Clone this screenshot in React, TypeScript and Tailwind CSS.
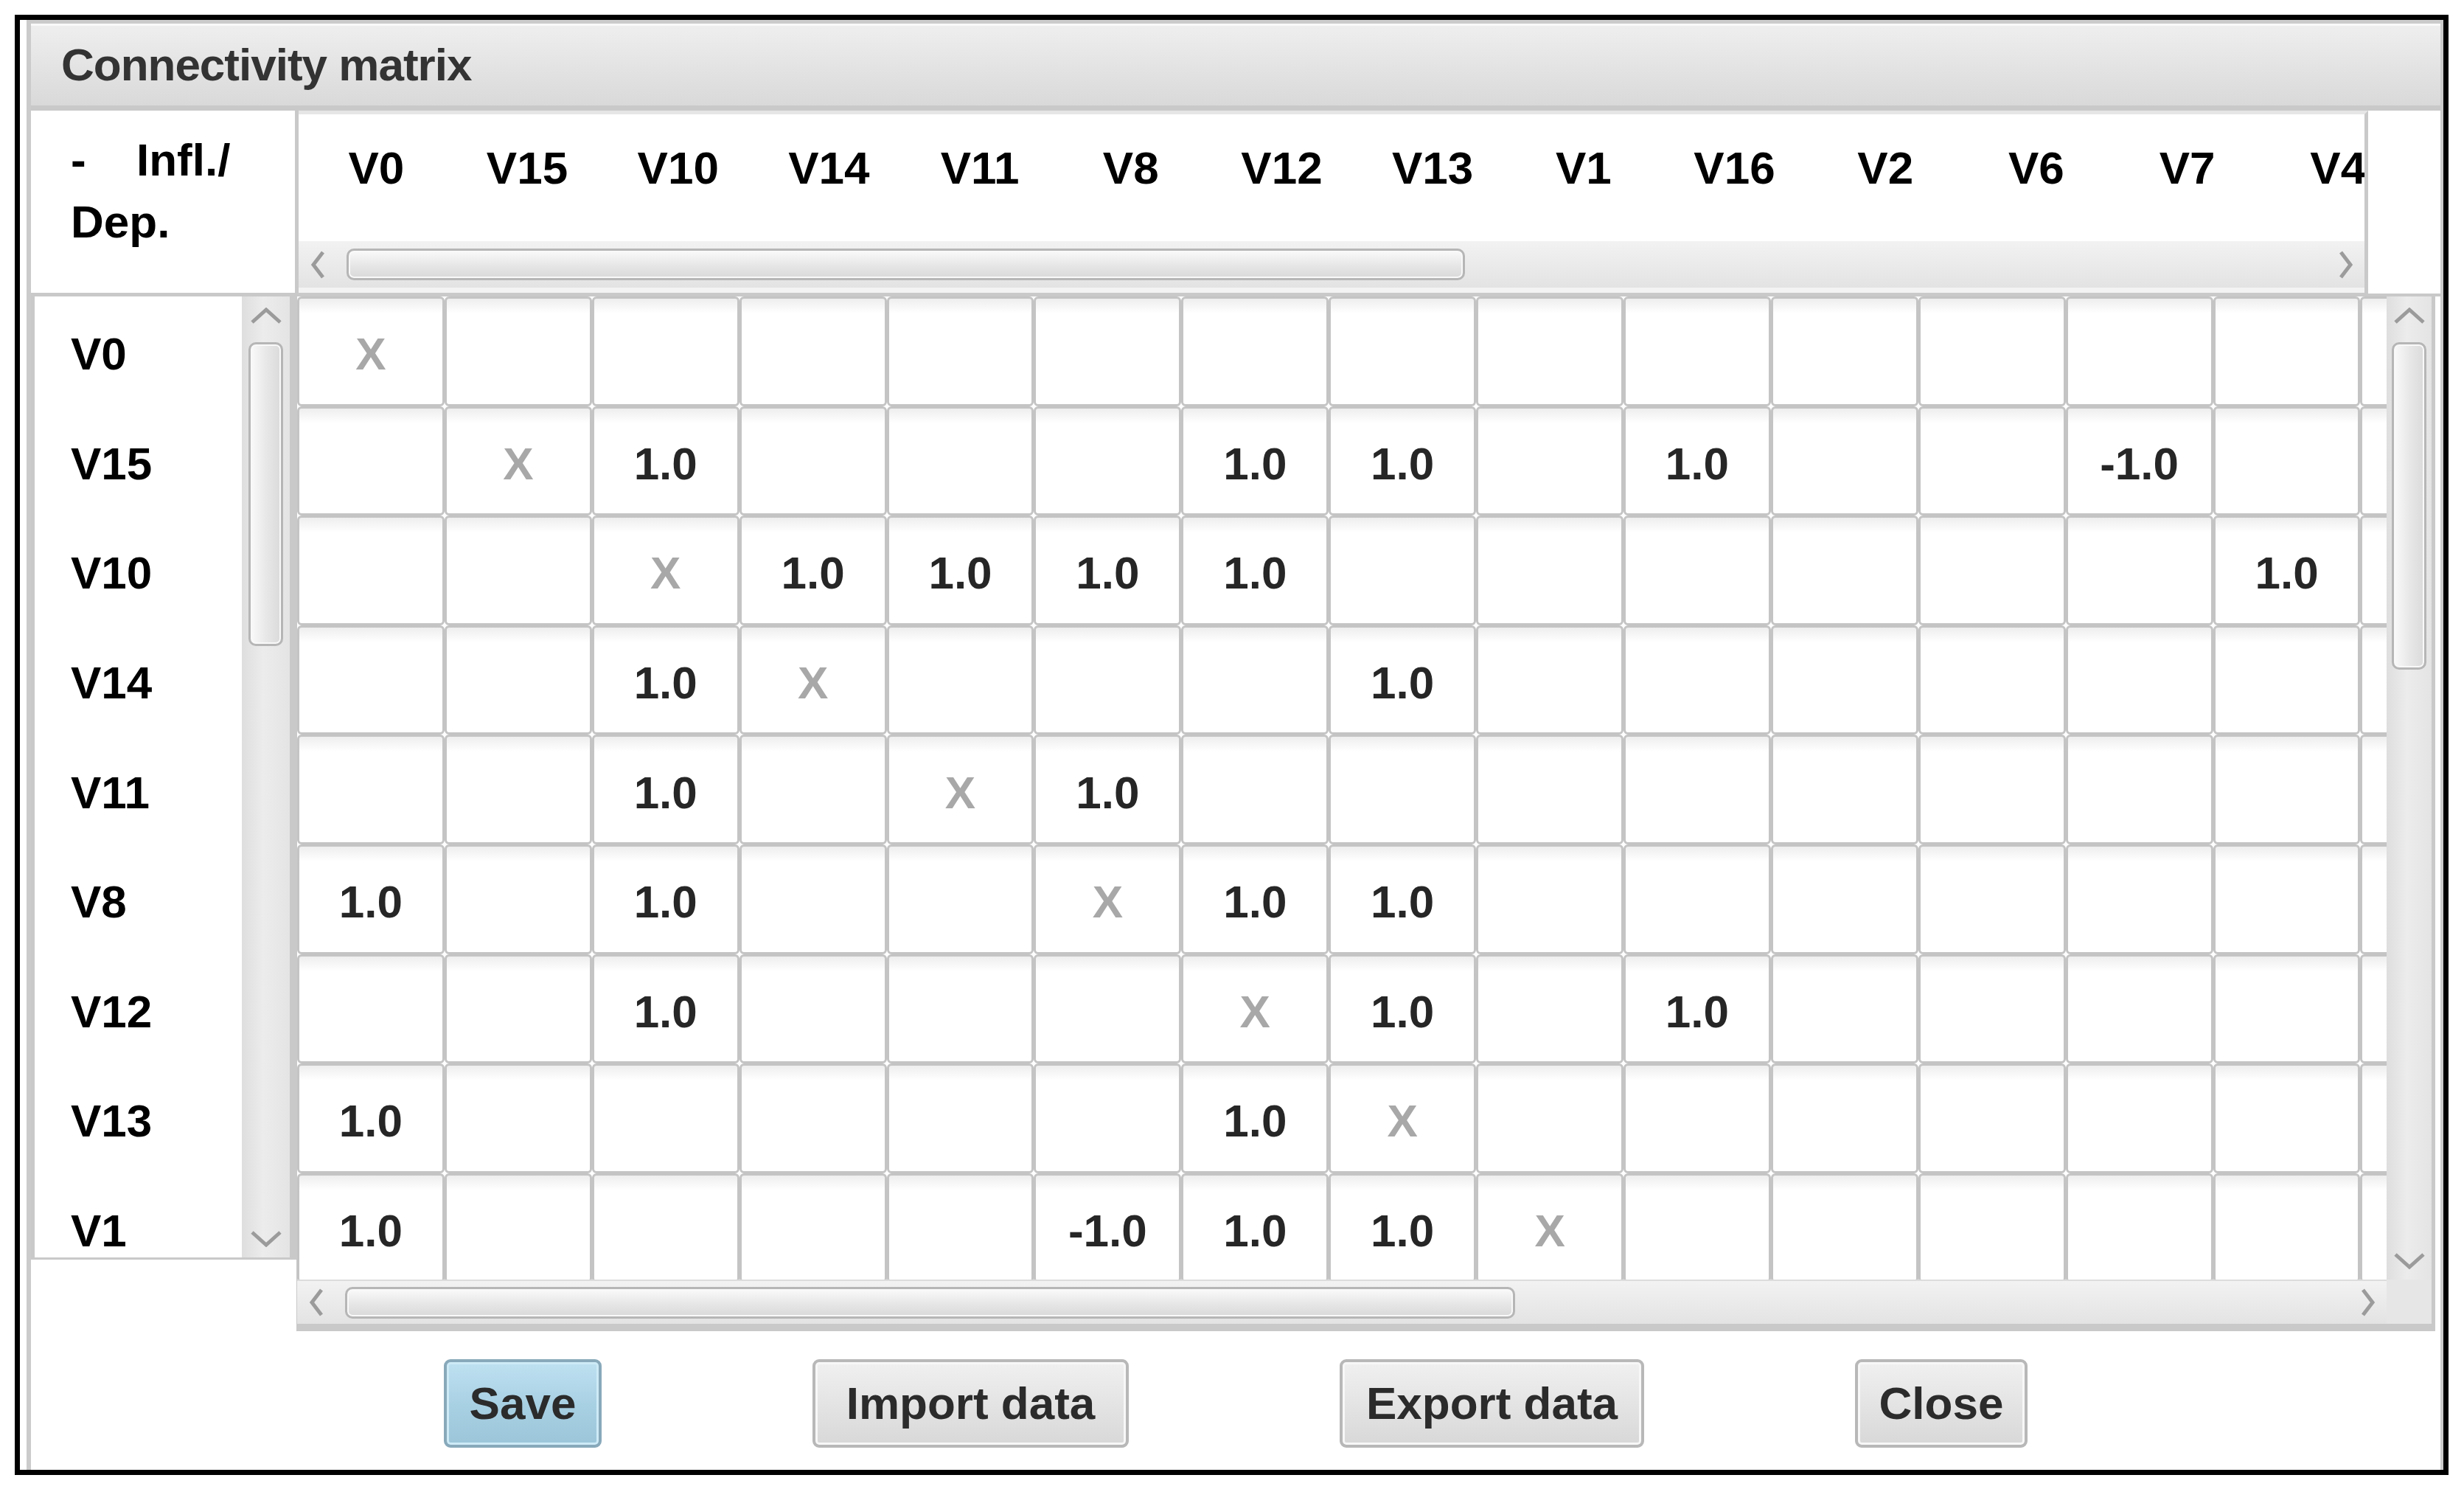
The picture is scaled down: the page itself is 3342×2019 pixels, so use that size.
import React from 'react';

const COLS = ['V0', 'V15', 'V10', 'V14', 'V11', 'V8', 'V12', 'V13', 'V1', 'V16', 'V2', 'V6', 'V7', 'V4'];
const ROWS = ['V0', 'V15', 'V10', 'V14', 'V11', 'V8', 'V12', 'V13', 'V1'];

// non-empty cells per row (column index -> value); the diagonal is drawn as "X"
const DATA: Record<string, Record<number, string>> = {
  V0: {},
  V15: { 2: '1.0', 6: '1.0', 7: '1.0', 9: '1.0', 12: '-1.0' },
  V10: { 3: '1.0', 4: '1.0', 5: '1.0', 6: '1.0', 13: '1.0' },
  V14: { 2: '1.0', 7: '1.0' },
  V11: { 2: '1.0', 5: '1.0' },
  V8: { 0: '1.0', 2: '1.0', 6: '1.0', 7: '1.0' },
  V12: { 2: '1.0', 7: '1.0', 9: '1.0' },
  V13: { 0: '1.0', 6: '1.0' },
  V1: { 0: '1.0', 5: '-1.0', 6: '1.0', 7: '1.0' },
};

type Dir = 'up' | 'down' | 'left' | 'right';

function Chevron({ dir }: { dir: Dir }) {
  const vertical = dir === 'up' || dir === 'down';
  const points = {
    up: '2,20 21,3 40,20',
    down: '2,3 21,20 40,3',
    left: '17,2 4,19 17,36',
    right: '3,2 16,19 3,36',
  }[dir];
  return (
    <svg
      width={vertical ? 42 : 20}
      height={vertical ? 23 : 38}
      viewBox={vertical ? '0 0 42 23' : '0 0 20 38'}
      className="shrink-0"
    >
      <polyline points={points} fill="none" stroke="#9b9b9b" strokeWidth="5" />
    </svg>
  );
}

function HScroll({ thumbW }: { thumbW: number }) {
  return (
    <div className="flex h-full items-center bg-[linear-gradient(#f2f2f2,#e3e3e3)] pl-[16px] pr-[15px]">
      <Chevron dir="left" />
      <div
        className="ml-[29px] h-[43px] shrink-0 rounded-[10px] border-[3px] border-[#b6b6b6] bg-[linear-gradient(#fafafa,#e6e6e6_55%,#d9d9d9)] shadow-[inset_0_0_0_2px_#f9f9f9]"
        style={{ width: thumbW }}
      />
      <div className="flex-1" />
      <Chevron dir="right" />
    </div>
  );
}

function VScroll({ thumbH, upTop, bottomPad }: { thumbH: number; upTop: number; bottomPad: number }) {
  return (
    <div
      className="flex h-full flex-col items-center bg-[linear-gradient(to_right,#dedede,#ececec_45%,#e4e4e4)]"
      style={{ paddingTop: upTop, paddingBottom: bottomPad }}
    >
      <Chevron dir="up" />
      <div
        className="mt-[24px] w-[47px] shrink-0 rounded-[10px] border-[3px] border-[#b6b6b6] bg-[linear-gradient(to_right,#fafafa,#e8e8e8_50%,#dadada)] shadow-[inset_0_0_0_2px_#f9f9f9]"
        style={{ height: thumbH }}
      />
      <div className="flex-1" />
      <Chevron dir="down" />
    </div>
  );
}

function Cell({ value, diag }: { value?: string; diag: boolean }) {
  return (
    <div className="flex h-[148.6px] w-[199.9px] shrink-0 items-center justify-center rounded-[6px] border-[3px] border-[#c4c4c4] bg-[linear-gradient(#eeeeee,#ffffff_20px)] pt-[8px] leading-[72px]">
      {diag ? <span className="text-[#a8a8a8]">X</span> : <span className="text-[#262626]">{value}</span>}
    </div>
  );
}

function Button({ label, width, primary }: { label: string; width: number; primary?: boolean }) {
  return (
    <div
      className={
        primary
          ? 'flex h-[120px] shrink-0 items-center justify-center rounded-[9px] border-[4px] border-[#88a9ba] bg-[linear-gradient(#bfe1f1,#a9d1e4_50%,#9cc5d9)] leading-[72px] text-[#2b2b2b] shadow-[inset_0_0_0_3px_#cdeaf6]'
          : 'flex h-[120px] shrink-0 items-center justify-center rounded-[9px] border-[4px] border-[#b8b8b8] bg-[linear-gradient(#f0f0f0,#e4e4e4_50%,#d8d8d8)] leading-[72px] text-[#2b2b2b] shadow-[inset_0_0_0_3px_#f7f7f7]'
      }
      style={{ width }}
    >
      {label}
    </div>
  );
}

export default function App() {
  return (
    <div className="h-[2019px] w-[3342px] bg-white pl-[20px] pt-[20px] font-['Liberation_Sans',Arial,sans-serif] text-[62px] font-bold">
      <div className="flex h-[1980px] w-[3301px] border-[7px] border-black bg-white pl-[9px]">
        <div className="flex flex-1 flex-col border-l-[6px] border-r-[4px] border-t-[5px] border-[#cbcbcb]">
          {/* title bar */}
          <div className="flex h-[118px] shrink-0 items-center border-b-[7px] border-[#c9c9c9] bg-[linear-gradient(#efefef,#d9d9d9)] pl-[41px] tracking-[-1px] text-[#333333] shadow-[inset_0_3px_0_#f9f9f9]">
            Connectivity matrix
          </div>

          {/* header row */}
          <div className="flex h-[252px] shrink-0">
            <div className="w-[363px] shrink-0 border-b-[5px] border-r-[5px] border-[#c9c9c9] bg-white pl-[54px] pt-[25px] leading-[84px] text-black">
              <div>
                <span className="inline-block w-[89px]">-</span>Infl./
              </div>
              <div>Dep.</div>
            </div>
            <div className="flex w-[2807px] shrink-0 flex-col border-b-[5px] border-r-[5px] border-t-[5px] border-b-[#c9c9c9] border-r-[#c9c9c9] border-t-[#e6e6e6]">
              <div className="flex h-[172px] shrink-0 overflow-hidden bg-white pl-[3px] pt-[37px] leading-[72px] text-black">
                {COLS.map((c) => (
                  <div key={c} className="w-[204.7px] shrink-0 text-center">
                    {c}
                  </div>
                ))}
              </div>
              <div className="h-[63px] shrink-0">
                <HScroll thumbW={1517} />
              </div>
              <div className="flex-1 bg-[#f3f3f3]" />
            </div>
            <div className="flex-1 border-b-[4px] border-[#c9c9c9] bg-white" />
          </div>

          {/* body row */}
          <div className="flex h-[1403px] shrink-0">
            <div className="flex w-[360px] shrink-0 flex-col">
              <div className="flex h-[1306px] shrink-0 border-b-[3px] border-l-[5px] border-r-[9px] border-[#c9c9c9]">
                <div className="w-[281px] shrink-0 overflow-hidden bg-white text-black">
                  {ROWS.map((r) => (
                    <div key={r} className="flex h-[148.6px] items-center pl-[49px] pt-[8px] leading-[72px]">
                      {r}
                    </div>
                  ))}
                </div>
                <div className="w-[65px] shrink-0">
                  <VScroll thumbH={412} upTop={15} bottomPad={14} />
                </div>
              </div>
              <div className="flex-1 bg-white" />
            </div>

            <div className="flex w-[2901px] shrink-0 flex-col border-b-[10px] border-l-[1px] border-r-[5px] border-[#c9c9c9]">
              <div className="flex h-[1333px] shrink-0">
                <div className="w-[2834px] shrink-0 overflow-hidden bg-white">
                  {ROWS.map((r, ri) => (
                    <div key={r} className="flex">
                      {Array.from({ length: 15 }).map((_, ci) => (
                        <Cell key={ci} diag={ci === ri} value={DATA[r][ci]} />
                      ))}
                    </div>
                  ))}
                </div>
                <div className="w-[61px] shrink-0">
                  <VScroll thumbH={444} upTop={15} bottomPad={14} />
                </div>
              </div>
              <div className="flex h-[60px] shrink-0">
                <div className="w-[2834px] shrink-0 border-t-[2px] border-[#dcdcdc]">
                  <HScroll thumbW={1587} />
                </div>
                <div className="w-[61px] shrink-0 bg-[#e6e6e6]" />
              </div>
            </div>
            <div className="flex-1 bg-white" />
          </div>

          {/* buttons */}
          <div className="flex flex-1 items-center justify-center gap-[286px] bg-white pt-[8px]">
            <Button label="Save" width={214} primary />
            <Button label="Import data" width={429} />
            <Button label="Export data" width={413} />
            <Button label="Close" width={234} />
          </div>
        </div>
      </div>
    </div>
  );
}
